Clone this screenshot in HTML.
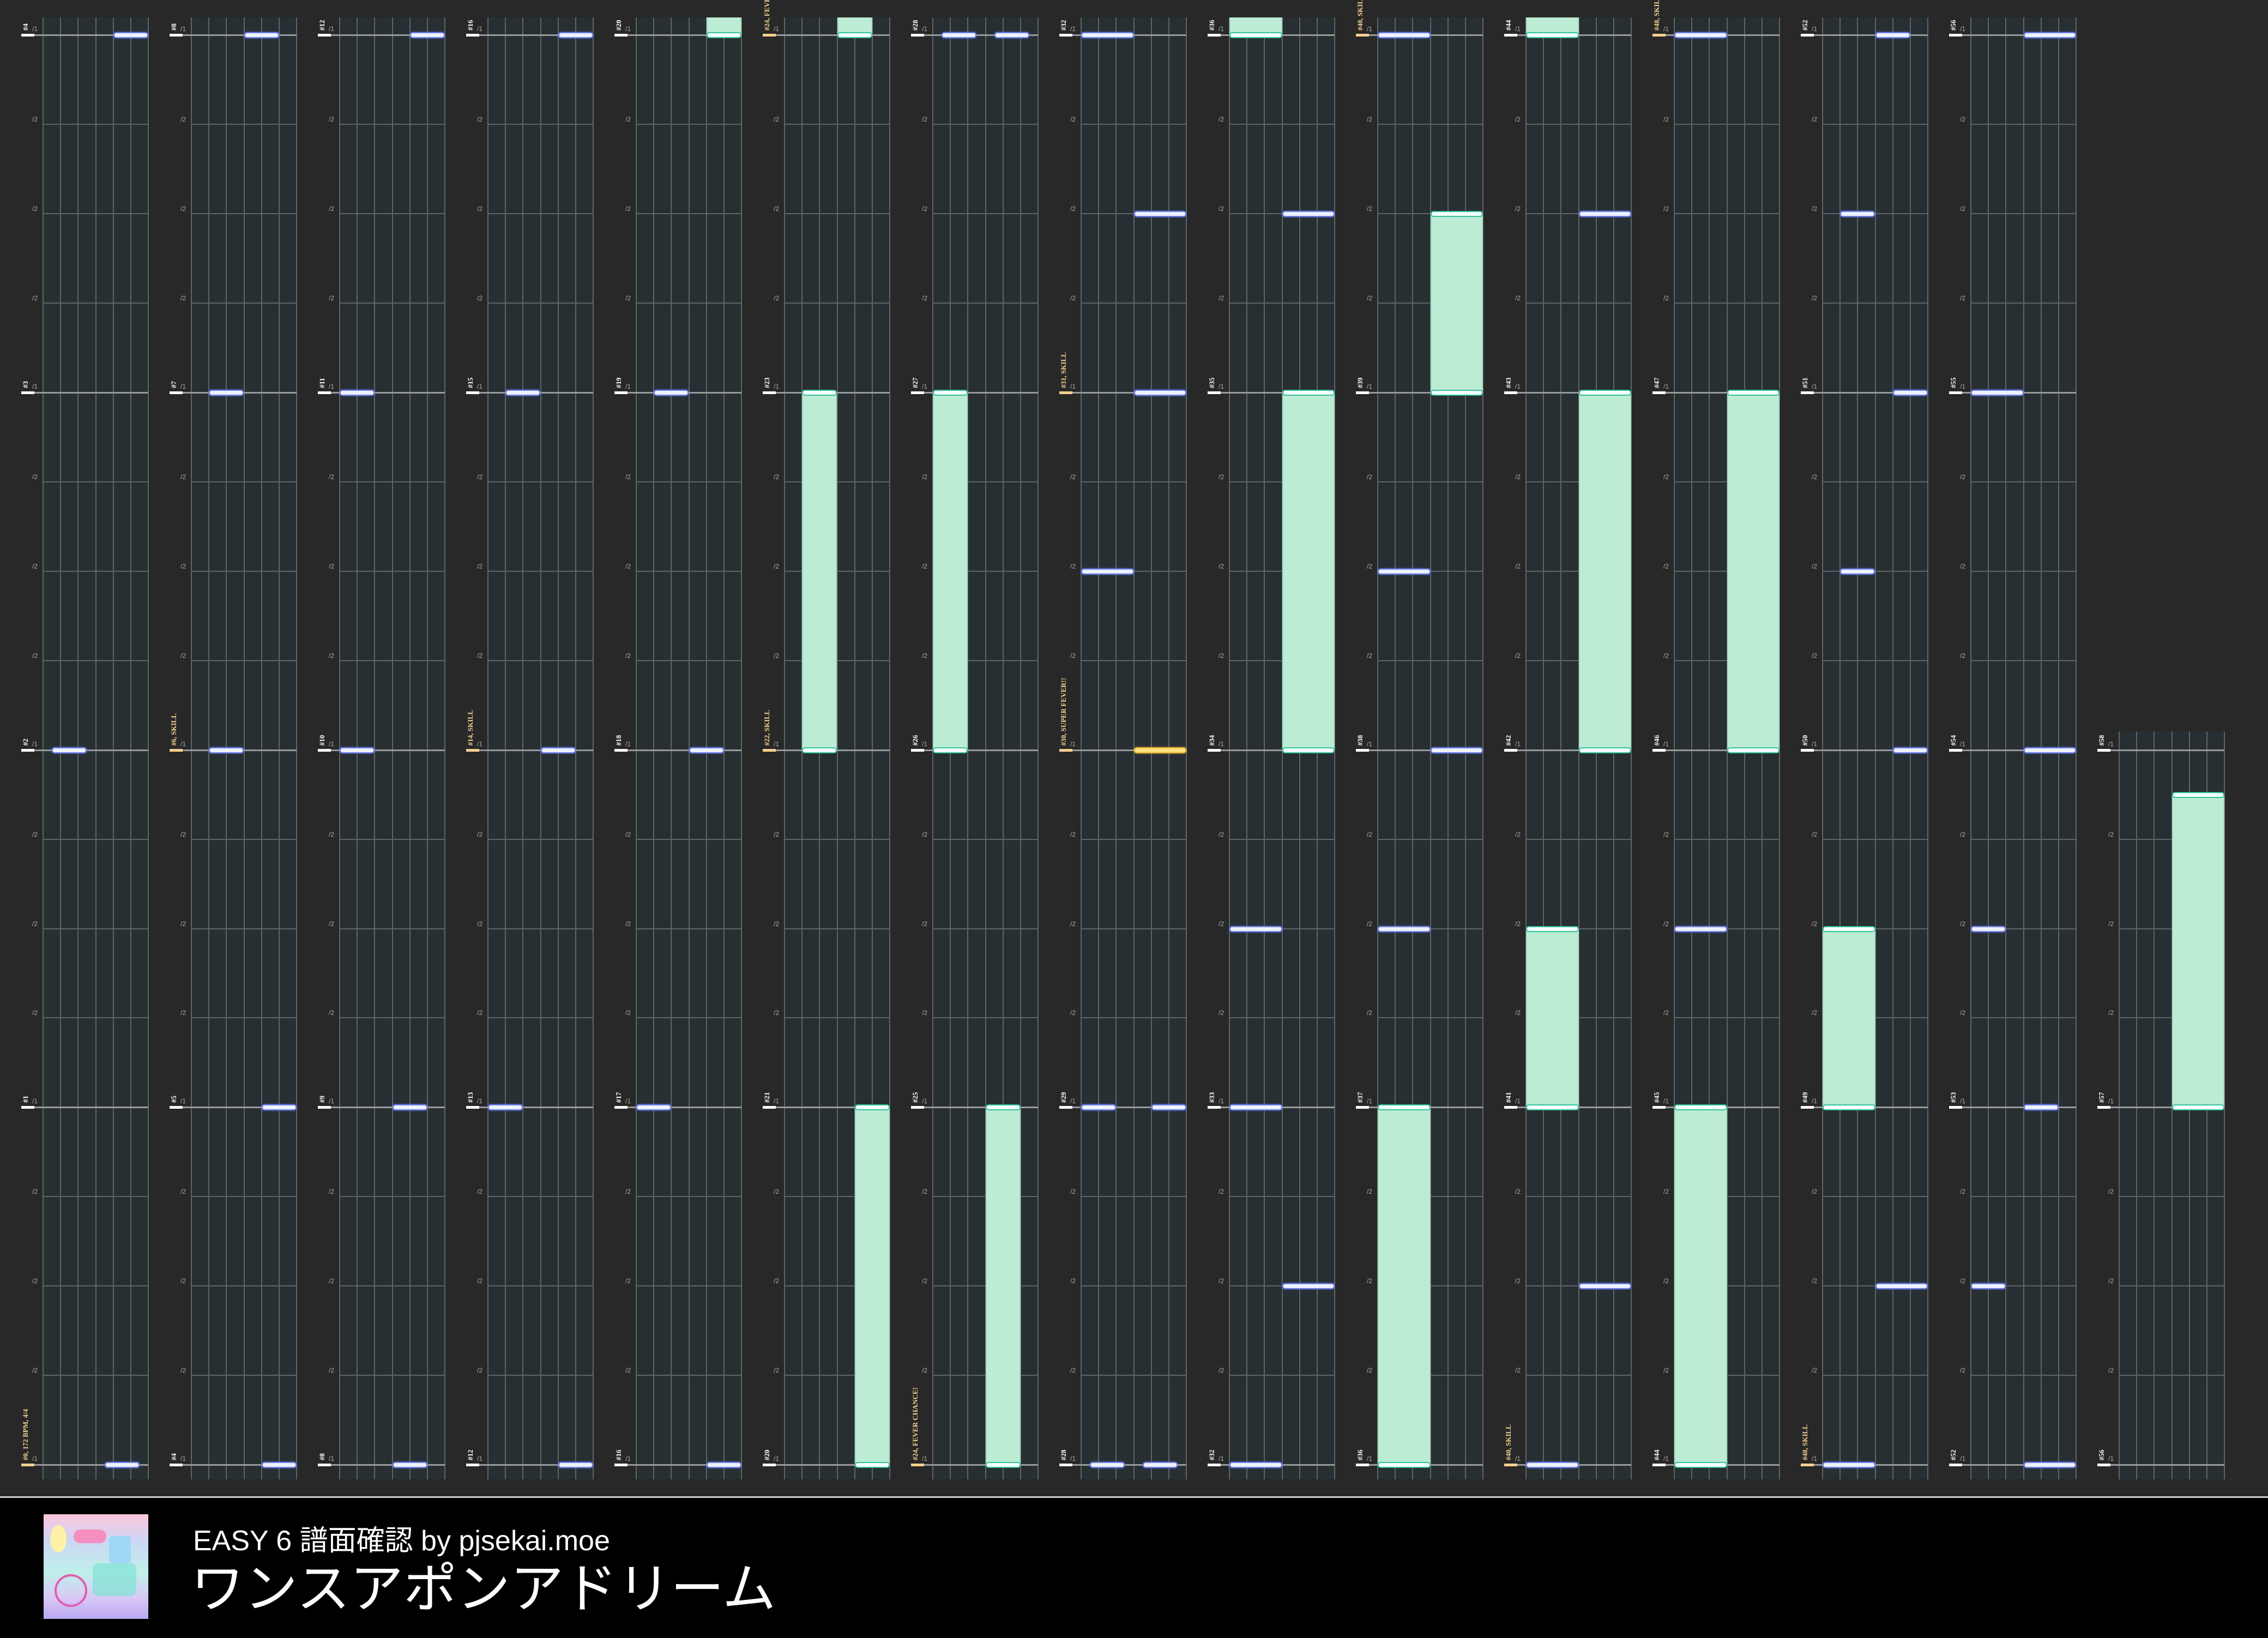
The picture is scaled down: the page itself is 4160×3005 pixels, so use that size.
<!DOCTYPE html>
<html><head><meta charset="utf-8"><style>
html,body{margin:0;padding:0}
body{width:4160px;height:3002px;background:#282828;position:relative;overflow:hidden;font-family:"Liberation Sans","Noto Sans CJK JP",sans-serif}
.a{position:absolute}
.panel{position:absolute;background:#272f33}
.vl{position:absolute;width:2px;background:#5d6567}
.hl{position:absolute;height:2px;background:#5d6567}
.ml{position:absolute;height:3px;background:#9a9a9a}
.bar{position:absolute;height:5px;background:#fff}
.lbl{position:absolute;color:#fff;font-size:13px;font-family:"Liberation Serif",serif;transform:rotate(-90deg);transform-origin:left top;white-space:nowrap;font-weight:bold}
.lbl.y{color:#f7d18f}
.sl{position:absolute;color:#aaa;font-size:12px;font-family:"Liberation Sans",sans-serif}
.tap{position:absolute;height:7px;background:#eef1ff;border:2px solid #6f82e8;border-radius:5px;box-shadow:0 0 3px #5a6ee0}
.tap.yel{background:#ffe07a;border-color:#e8b93a;box-shadow:0 0 3px #e0a020}
.hold{position:absolute;background:#bdecd5;border-left:2px solid #a8dcc4;border-right:2px solid #a8dcc4;box-sizing:border-box}
.hp{position:absolute;height:7px;background:#f4fffb;border:2px solid #35c39c;border-radius:5px}
#foot{position:absolute;left:0;top:2745px;width:4160px;height:257px;background:#000;border-top:3px solid #cfcfcf}
</style></head><body>
<div id="root"></div>
<div id="foot">
<div class="a" style="left:80px;top:30px;width:192px;height:192px;background:linear-gradient(180deg,#ffc6dc 0%,#cdd6f5 25%,#bff0ea 55%,#d9c8f6 80%,#b9a8f0 100%)">
<div class="a" style="left:12px;top:20px;width:30px;height:50px;border-radius:50%;background:#fff2a8"></div>
<div class="a" style="left:55px;top:28px;width:60px;height:25px;border-radius:12px;background:#f58fc0"></div>
<div class="a" style="left:120px;top:40px;width:40px;height:50px;background:#9fd8f5;border-radius:6px"></div>
<div class="a" style="left:20px;top:110px;width:60px;height:60px;border-radius:50%;border:4px solid #e060b0;box-sizing:border-box"></div>
<div class="a" style="left:90px;top:90px;width:80px;height:60px;background:#7fe3d6;opacity:.7;border-radius:10px"></div>
</div>
<div class="a" style="left:354px;top:36px;color:#fff;font-size:52px;white-space:nowrap">EASY 6 譜面確認 by pjsekai.moe</div>
<div class="a" style="left:350px;top:108px;color:#fff;font-size:98px;white-space:nowrap;line-height:1.2">ワンスアポンアドリーム</div>
</div>
<script>
(function(){
var R=document.getElementById('root');
function el(c,s,t){var d=document.createElement('div');d.className=c;for(var k in s)d.style[k]=typeof s[k]=='number'?s[k]+'px':s[k];if(t)d.textContent=t;R.appendChild(d);return d;}
var LW=193,HL=LW/12,BY=163.95;
function cl(i){return 79+272*i}
function yb(b){return 64+b*BY}
var special={0:"#0, 172 BPM, 4/4",6:"#6, SKILL",14:"#14, SKILL",22:"#22, SKILL",24:"#24, FEVER CHANCE!",30:"#30, SUPER FEVER!!",31:"#31, SKILL",40:"#40, SKILL",48:"#48, SKILL"};
for(var i=0;i<15;i++){
 var L=cl(i),pt=(i==14?1342:32),pb=2714;
 el('panel',{left:L,top:pt,width:LW,height:pb-pt});
 for(var k=0;k<=6;k++)el('vl',{left:L-1+k*LW/6,top:pt,height:pb-pt});
 for(var b=0;b<=16;b++){
  var y=yb(b); if(y<pt)continue;
  var m=(b%4==0);
  if(!m){el('hl',{left:L,top:y-1,width:LW});el('sl',{left:L-20,top:y-16},'/2');continue;}
  var meas=4*i+(16-b)/4;
  if(i==14){ if(b==8)meas=58; else if(b==12)meas=57; else if(b==16)meas=56; }
  var sp=special[meas];
  el('ml',{left:L-40,top:y-1,width:LW+40});
  el('bar',{left:L-40,top:y-2,width:24,background:sp?'#f7d18f':'#fff'});
  el('sl',{left:L-20,top:y-18},'/1');
  el('lbl'+(sp?' y':''),{left:L-40,top:y-8},sp||('#'+meas));
 }
}
function sx(i,x){var off=(x-cl(i)/2.6531)*2.6531;return Math.round(off/HL)*HL;}
function tap(i,b,x1,x2,yel){var a=sx(i,x1),c=sx(i,x2);el('tap'+(yel?' yel':''),{left:cl(i)+a,top:yb(b)-5,width:c-a-4});}
function hold(i,b1,b2,x1,x2){var a=sx(i,x1),c=sx(i,x2);var t=b1==null?32:yb(b1);var bt=yb(b2);
 el('hold',{left:cl(i)+a,top:t,width:c-a,height:bt-t});
 if(b1!=null)el('hp',{left:cl(i)+a,top:t-5,width:c-a-4});
 el('hp',{left:cl(i)+a,top:bt-5,width:c-a-4});}
var T=[[0,0,78,102],[0,8,36,60],[0,16,73,96],
[1,0,170,193],[1,4,145,168],[1,8,145,168],[1,12,181,205],[1,16,181,205],
[2,0,284,307],[2,4,235,259],[2,8,235,259],[2,12,271,295],[2,16,271,295],
[3,0,386,410],[3,4,350,373],[3,8,374,397],[3,12,338,361],[3,16,386,410],
[4,4,452,476],[4,8,477,500],[4,12,440,464],[4,16,489,512],
[6,0,652,675],[6,0,688,711],
[7,0,748,783],[7,2,784,819],[7,4,784,819],[7,6,748,783],[7,8,784,819,1],[7,12,748,771],[7,12,796,819],[7,16,755,777],[7,16,790,813],
[8,2,887,922],[8,10,850,886],[8,12,850,886],[8,14,887,922],[8,16,850,886],
[9,0,953,988],[9,6,953,988],[9,8,990,1024],[9,10,953,988],
[10,2,1092,1127],[10,14,1092,1127],[10,16,1055,1091],
[11,0,1158,1193],[11,10,1158,1193],
[12,0,1297,1320],[12,2,1272,1296],[12,4,1309,1332],[12,6,1272,1296],[12,8,1309,1332],[12,14,1297,1332],[12,16,1260,1296],
[13,0,1399,1435],[13,4,1363,1398],[13,8,1399,1435],[13,10,1363,1386],[13,12,1399,1422],[13,14,1363,1386],[13,16,1399,1435]];
var H=[[4,null,0,489,512],[5,null,0,579,603],[5,4,8,555,578],[5,12,16,591,615],
[6,4,8,645,669],[6,12,16,682,705],[8,null,0,850,886],[8,4,8,887,922],
[9,2,4,990,1024],[9,12,16,953,988],[10,null,0,1055,1091],[10,4,8,1092,1127],[10,10,12,1055,1091],
[11,4,8,1194,1229],[11,12,16,1158,1193],[12,10,12,1260,1296],[14,8.5,12,1502,1538]];
H.forEach(function(h){hold(h[0],h[1],h[2],h[3],h[4]);});
T.forEach(function(t){tap(t[0],t[1],t[2],t[3],t[4]);});
})();
</script>
</body></html>
